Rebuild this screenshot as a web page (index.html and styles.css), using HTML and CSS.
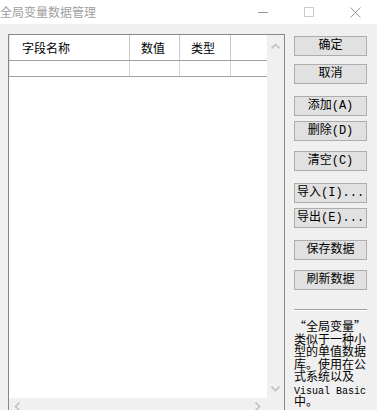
FILE: index.html
```html
<!DOCTYPE html>
<html lang="zh-CN">
<head>
  <meta charset="UTF-8" />
  <title>全局变量数据管理</title>
  <link rel="stylesheet" href="styles.css">
</head>
<body>
  <header class="titlebar">
    <span class="title">全局变量数据管理</span>
    <div class="caption">
      <span class="cap-btn"><svg width="10" height="10" viewBox="0 0 10 10"><path d="M0 5.5H10" stroke="#999" fill="none"/></svg></span>
      <span class="cap-btn"><svg width="10" height="10" viewBox="0 0 10 10"><rect x="0.5" y="0.5" width="9" height="9" stroke="#ccc" fill="none"/></svg></span>
      <span class="cap-btn"><svg width="11" height="11" viewBox="0 0 11 11"><path d="M0.5 0.5L10.5 10.5M10.5 0.5L0.5 10.5" stroke="#999" fill="none"/></svg></span>
    </div>
  </header>

  <main class="dialog">
    <div class="listbox">
      <div class="list-body">
        <div class="list-view">
          <div class="row head">
            <div class="cell c1">字段名称</div>
            <div class="cell c2">数值</div>
            <div class="cell c3">类型</div>
            <div class="cell c4"></div>
          </div>
          <div class="row item">
            <div class="cell c1"></div>
            <div class="cell c2"></div>
            <div class="cell c3"></div>
            <div class="cell c4"></div>
          </div>
        </div>
        <div class="vscroll">
          <svg width="9" height="6" viewBox="0 0 9 6"><path d="M0.5 5.5L4.5 1.5L8.5 5.5" stroke="#c2c2c2" stroke-width="1.6" fill="none"/></svg>
          <svg width="9" height="6" viewBox="0 0 9 6"><path d="M0.5 0.5L4.5 4.5L8.5 0.5" stroke="#c2c2c2" stroke-width="1.6" fill="none"/></svg>
        </div>
      </div>
      <div class="hscroll">
        <svg width="6" height="9" viewBox="0 0 6 9"><path d="M5.5 0.5L1.5 4.5L5.5 8.5" stroke="#c2c2c2" stroke-width="1.6" fill="none"/></svg>
        <svg width="6" height="9" viewBox="0 0 6 9"><path d="M0.5 0.5L4.5 4.5L0.5 8.5" stroke="#c2c2c2" stroke-width="1.6" fill="none"/></svg>
        <span class="corner"></span>
      </div>
    </div>

    <aside class="side">
      <button class="btn">确定</button>
      <button class="btn gap-8">取消</button>
      <button class="btn gap-12">添加(A)</button>
      <button class="btn gap-5">删除(D)</button>
      <button class="btn gap-10">清空(C)</button>
      <button class="btn gap-12 left">导入(I)...</button>
      <button class="btn gap-5 left">导出(E)...</button>
      <button class="btn gap-12">保存数据</button>
      <button class="btn gap-10">刷新数据</button>
      <hr class="sep">
      <p class="note">“全局变量”类似于一种小型的单值数据库。使用在公式系统以及<span class="latin">Visual Basic</span>中。</p>
    </aside>
  </main>
</body>
</html>
```

FILE: styles.css
```css
html, body {
  margin: 0;
  height: 100%;
  overflow: hidden;
}
body {
  background: #f0f0f0;
  font-family: "Noto Sans CJK SC", "Liberation Sans", sans-serif;
  font-size: 12px;
  color: #000;
}

.titlebar {
  height: 24px;
  background: #fff;
  display: flex;
  align-items: center;
  justify-content: space-between;
}
.title { color: #a0a0a0; font-size: 12px; line-height: 24px; margin-top: -1px; }
.caption { display: flex; margin-right: -1px; }
.cap-btn {
  width: 46px;
  height: 24px;
  display: flex;
  align-items: center;
  justify-content: center;
}

.dialog {
  display: flex;
  padding: 10px 0 0 8px;
}

.listbox {
  width: 275px;
  height: 380px;
  border: 1px solid #828790;
  background: #fff;
  display: flex;
  flex-direction: column;
  flex-shrink: 0;
}
.list-body { flex: 1; display: flex; }
.list-view { flex: 1; }
.vscroll {
  width: 17px;
  background: #f0f0f0;
  display: flex;
  flex-direction: column;
  justify-content: space-between;
  align-items: center;
  padding: 8px 0 6px;
}
.hscroll {
  height: 17px;
  background: #f0f0f0;
  display: flex;
  align-items: center;
  padding-left: 5px;
}
.hscroll svg:nth-child(2) { margin-left: auto; margin-right: 6px; }
.corner { width: 17px; }

.row { display: flex; }
.row.head { height: 25px; border-bottom: 1px solid #a0a0a0; }
.row.item { height: 15px; border-bottom: 1px solid #a0a0a0; }
.cell {
  box-sizing: border-box;
  padding-left: 11px;
  line-height: 25px;
  border-right: 1px solid #d5d5d5;
}
.row.head .cell { border-right-color: #c8c8c8; }
.c1 { width: 121px; border-left: 1px solid #e5e5e5; padding-left: 12px; }
.c2 { width: 50px; }
.c3 { width: 51px; }
.c4 { width: 36px; border-right: none; }

.side {
  width: 73px;
  margin-left: 9px;
  padding-top: 2px;
  display: flex;
  flex-direction: column;
}
.btn {
  height: 20px;
  padding: 0;
  background: #e1e1e1;
  border: 1px solid #adadad;
  font-family: "Liberation Mono", "Noto Sans CJK SC", monospace;
  font-size: 12px;
  line-height: 17px;
  color: #000;
}
.btn.left { text-align: left; padding-left: 2px; }
.gap-5 { margin-top: 5px; }
.gap-8 { margin-top: 8px; }
.gap-10 { margin-top: 10px; }
.gap-12 { margin-top: 12px; }

.sep {
  margin: 19px 0 0;
  border: none;
  border-top: 1px solid #a0a0a0;
  border-bottom: 1px solid #fff;
}
.note {
  margin: 9px 0 0;
  line-height: 12.5px;
  word-break: break-all;
}
.latin {
  font-family: "Liberation Mono", monospace;
  font-size: 10px;
  line-height: 0;
  word-break: normal;
}
```
